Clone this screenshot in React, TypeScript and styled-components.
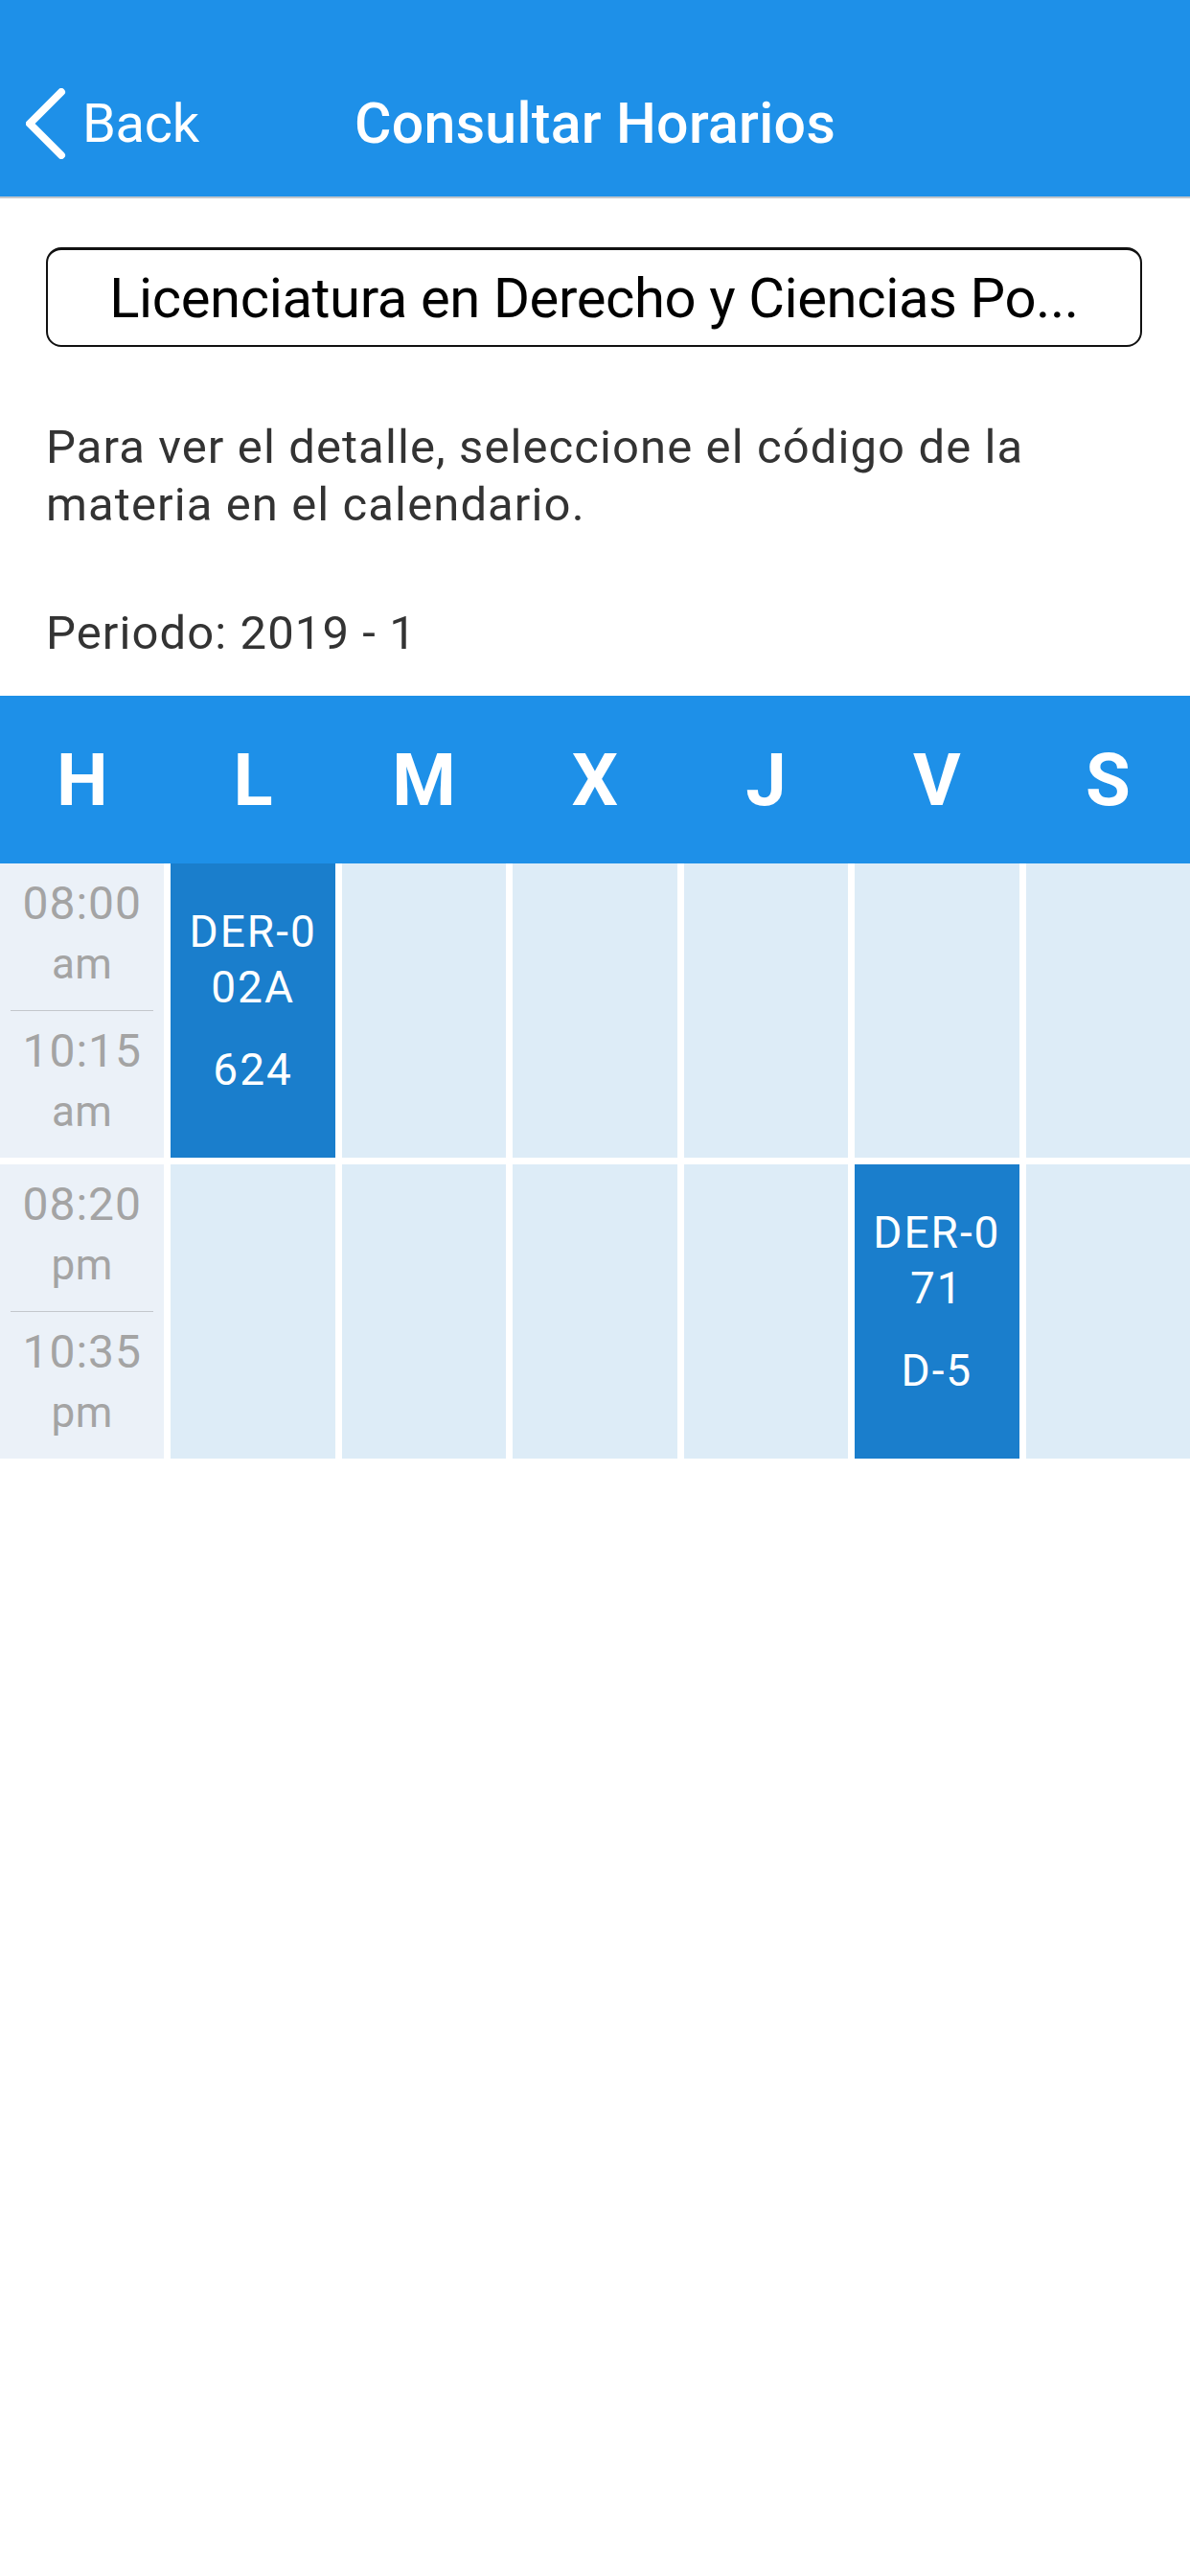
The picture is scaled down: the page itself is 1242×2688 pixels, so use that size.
import React from "react";
import styled, { createGlobalStyle } from "styled-components";

const GlobalStyle = createGlobalStyle`
  html, body {
    margin: 0;
    padding: 0;
    background: #ffffff;
  }
  body {
    font-family: Roboto, "Noto Sans", "Liberation Sans", sans-serif;
    -webkit-font-smoothing: antialiased;
  }
  * { box-sizing: border-box; }
`;

const Screen = styled.div`
  width: 1242px;
  min-height: 2688px;
  background: #ffffff;
  display: flex;
  flex-direction: column;
`;

/* ---------- navigation bar ---------- */

const NavBar = styled.header`
  height: 207px;
  padding-top: 52px;
  background: #1e90e8;
  border-bottom: 2px solid #c4c7cb;
  display: grid;
  grid-template-columns: 1fr auto 1fr;
  align-items: center;
`;

const BackButton = styled.button`
  justify-self: start;
  display: flex;
  align-items: center;
  gap: 17px;
  margin: 0;
  padding: 0 0 0 27px;
  border: none;
  background: transparent;
  color: #ffffff;
  font-family: inherit;
  font-size: 56px;
  font-weight: 400;
  letter-spacing: -0.3px;
  cursor: pointer;
`;

const NavTitle = styled.h1`
  margin: 0;
  color: #ffffff;
  font-size: 59px;
  font-weight: 500;
  letter-spacing: 0.3px;
  white-space: nowrap;
`;

const Chevron = () => (
  <svg width="42" height="74" viewBox="0 0 42 74" fill="none">
    <polyline
      points="37,4 4,37 37,70"
      stroke="#ffffff"
      strokeWidth="8"
      strokeLinecap="round"
      strokeLinejoin="round"
    />
  </svg>
);

/* ---------- program picker and notes ---------- */

const Content = styled.section`
  padding: 51px 49px 0 48px;
  display: flex;
  flex-direction: column;
`;

const Picker = styled.button`
  width: 1144px;
  height: 104px;
  margin: 0;
  padding: 0 20px;
  border: 2px solid #111111;
  border-top-width: 3px;
  border-radius: 16px;
  background: #ffffff;
  color: #000000;
  font-family: inherit;
  font-size: 58px;
  font-weight: 400;
  letter-spacing: -0.4px;
  white-space: nowrap;
  overflow: hidden;
  text-align: center;
`;

const Note = styled.p<{ $gap: number }>`
  margin: ${(p) => p.$gap}px 0 0;
  color: #333333;
  font-size: 49px;
  line-height: 60px;
  letter-spacing: 1.1px;
`;

/* ---------- weekly timetable ---------- */

const Timetable = styled.section`
  margin-top: 35px;
  display: flex;
  flex-direction: column;
`;

const DayHeader = styled.div`
  height: 175px;
  background: #1e90e8;
  display: grid;
  grid-template-columns: repeat(7, 1fr);
  column-gap: 7px;
  align-items: center;
`;

const DayLabel = styled.span`
  text-align: center;
  color: #ffffff;
  font-size: 76px;
  font-weight: 700;
`;

const SlotRows = styled.div`
  display: flex;
  flex-direction: column;
  gap: 7px;
`;

const SlotRow = styled.div`
  height: 307px;
  display: grid;
  grid-template-columns: repeat(7, 1fr);
  column-gap: 7px;
`;

const TimeCell = styled.div`
  background: #ebf1f8;
  display: grid;
  grid-template-rows: 1fr 1fr;
`;

const TimeHalf = styled.div<{ $divided?: boolean }>`
  margin: 0 11px;
  padding-bottom: 9px;
  display: flex;
  flex-direction: column;
  align-items: center;
  justify-content: center;
  gap: 6px;
  border-bottom: ${(p) => (p.$divided ? "1.5px solid #c3c7cc" : "none")};
`;

const Clock = styled.span`
  color: #a4a4a4;
  font-size: 48px;
  line-height: 60px;
  letter-spacing: 1px;
`;

const Meridiem = styled.span`
  color: #a4a4a4;
  font-size: 44px;
  line-height: 54px;
  letter-spacing: 0.5px;
`;

const DayCell = styled.div<{ $busy?: boolean }>`
  background: ${(p) => (p.$busy ? "#1a7ecc" : "#ddecf7")};
  padding-top: 42px;
  display: flex;
  flex-direction: column;
  align-items: center;
  color: #ffffff;
  font-size: 46px;
  line-height: 58px;
  letter-spacing: 2px;
  text-align: center;
`;

const CourseCode = styled.span`
  width: 146px;
  word-break: break-all;
`;

const Room = styled.span`
  margin-top: 28px;
`;

type Slot = {
  start: string;
  end: string;
  period: string;
  course?: { day: number; code: string; room: string };
};

const days = ["H", "L", "M", "X", "J", "V", "S"];

const slots: Slot[] = [
  {
    start: "08:00",
    end: "10:15",
    period: "am",
    course: { day: 1, code: "DER-002A", room: "624" },
  },
  {
    start: "08:20",
    end: "10:35",
    period: "pm",
    course: { day: 5, code: "DER-071", room: "D-5" },
  },
];

export default function App() {
  return (
    <>
      <GlobalStyle />
      <Screen>
        <NavBar>
          <BackButton type="button">
            <Chevron />
            Back
          </BackButton>
          <NavTitle>Consultar Horarios</NavTitle>
          <span />
        </NavBar>

        <Content>
          <Picker type="button">Licenciatura en Derecho y Ciencias Po...</Picker>
          <Note $gap={75}>
            Para ver el detalle, seleccione el código de la materia en el
            calendario.
          </Note>
          <Note $gap={74}>Periodo: 2019 - 1</Note>
        </Content>

        <Timetable>
          <DayHeader>
            {days.map((d) => (
              <DayLabel key={d}>{d}</DayLabel>
            ))}
          </DayHeader>
          <SlotRows>
            {slots.map((slot) => (
              <SlotRow key={slot.start + slot.period}>
                <TimeCell>
                  <TimeHalf $divided>
                    <Clock>{slot.start}</Clock>
                    <Meridiem>{slot.period}</Meridiem>
                  </TimeHalf>
                  <TimeHalf>
                    <Clock>{slot.end}</Clock>
                    <Meridiem>{slot.period}</Meridiem>
                  </TimeHalf>
                </TimeCell>
                {days.slice(1).map((_, i) => {
                  const busy = slot.course?.day === i + 1;
                  return (
                    <DayCell key={i} $busy={busy}>
                      {busy && slot.course && (
                        <>
                          <CourseCode>{slot.course.code}</CourseCode>
                          <Room>{slot.course.room}</Room>
                        </>
                      )}
                    </DayCell>
                  );
                })}
              </SlotRow>
            ))}
          </SlotRows>
        </Timetable>
      </Screen>
    </>
  );
}
